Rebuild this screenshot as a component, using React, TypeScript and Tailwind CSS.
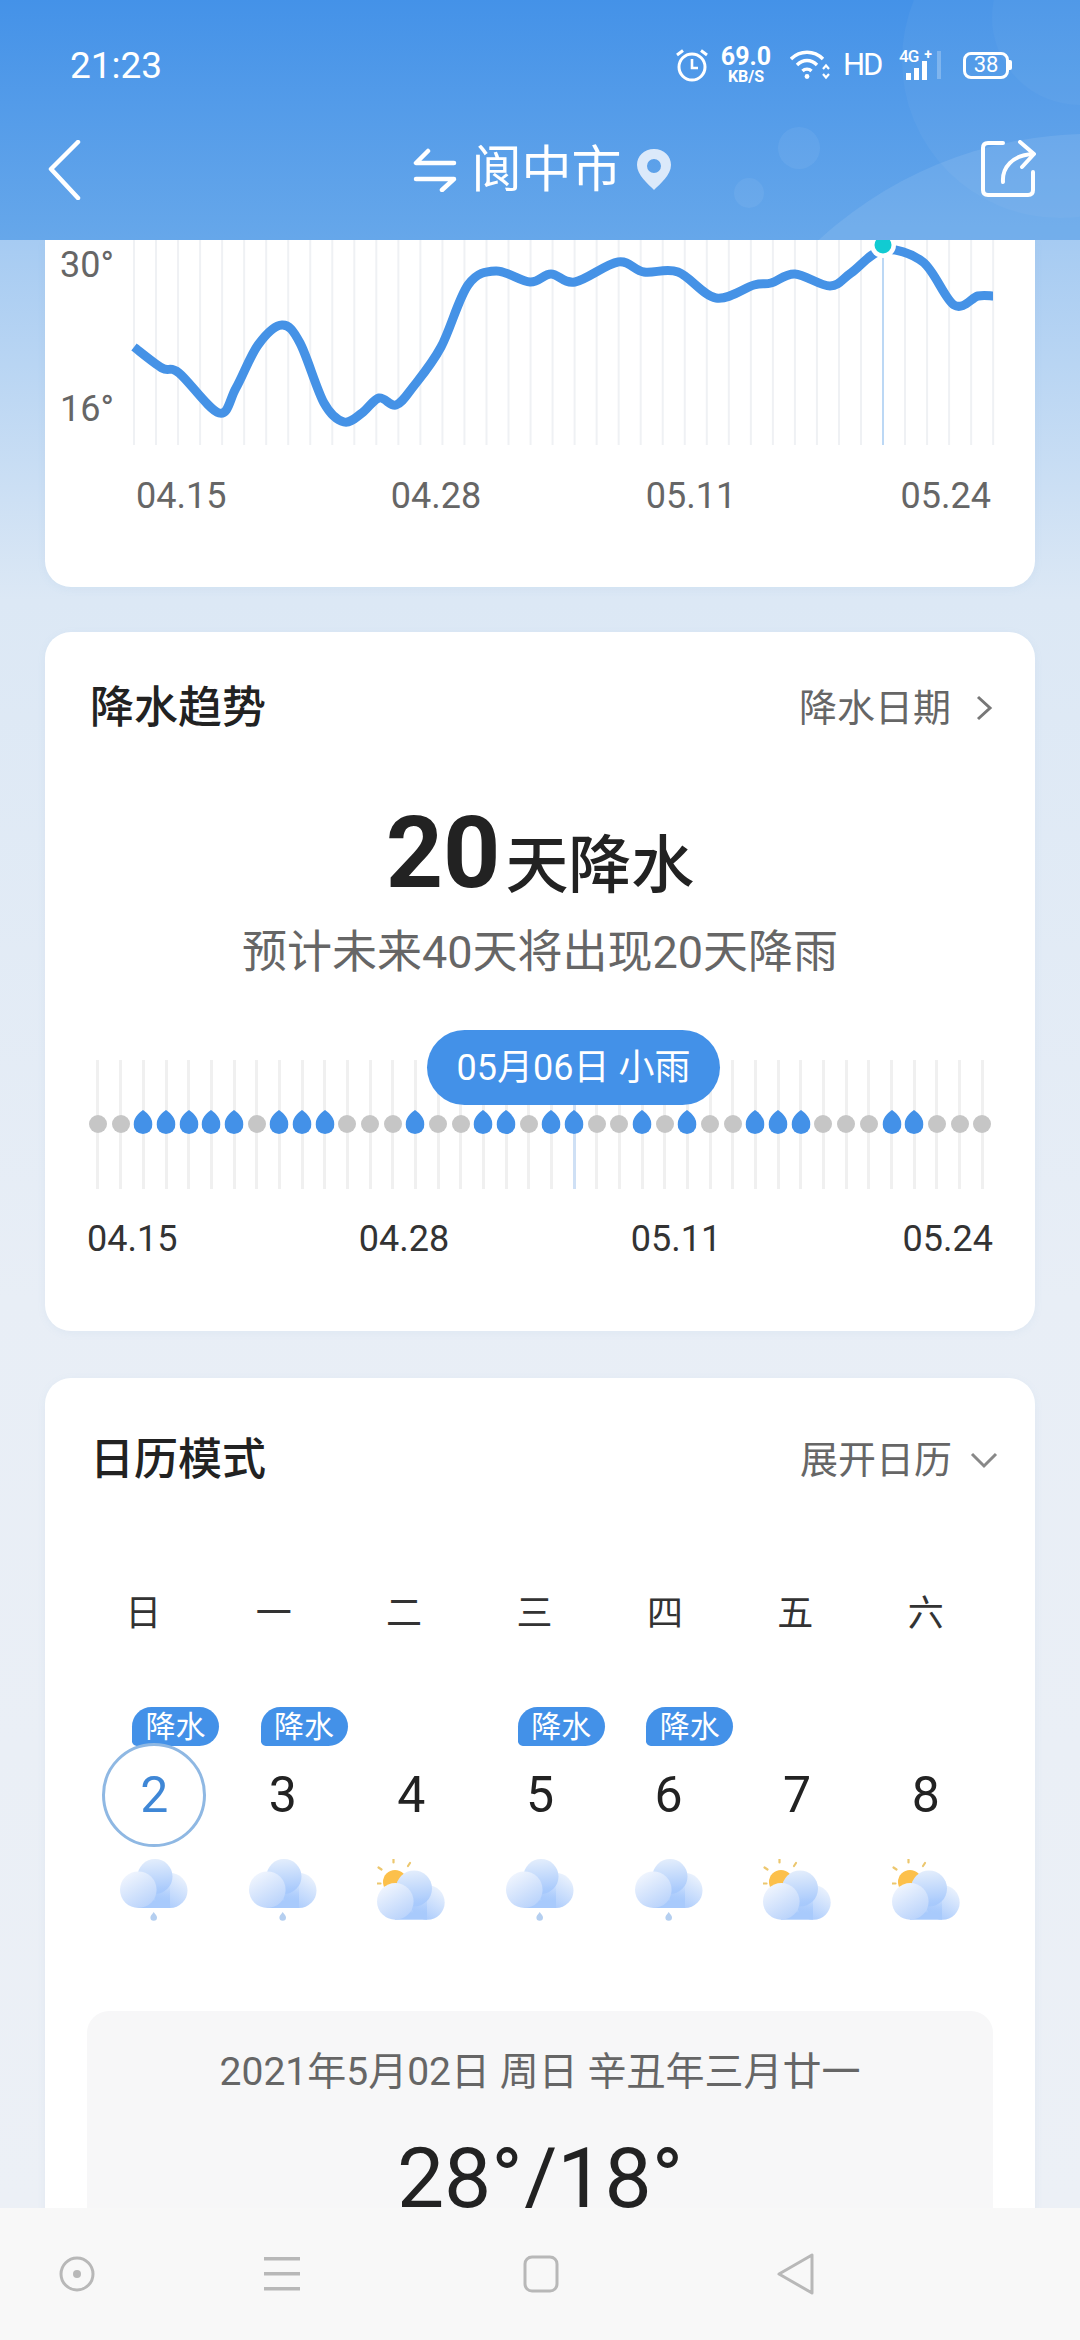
import { type ReactNode } from "react";

// page coordinates of the temperature curve, header overlaps the top of it
const CURVE: [number, number][] = [
  [134, 347], [162, 368], [179, 373], [219, 413], [236, 388], [258, 345], [282, 325], [300, 343],
  [324, 403], [344, 422], [362, 413], [379, 398], [396, 405], [413, 387], [441, 347], [468, 285],
  [496, 271], [530, 282], [551, 274], [575, 282], [618, 262], [644, 272], [678, 272], [716, 298],
  [754, 285], [771, 283], [795, 274], [830, 286], [851, 273], [883, 250], [923, 262], [954, 305],
  [978, 296], [993, 296],
];

function smoothPath(pts: [number, number][]) {
  let d = `M${pts[0][0]} ${pts[0][1]}`;
  for (let i = 0; i < pts.length - 1; i++) {
    const p0 = pts[Math.max(i - 1, 0)];
    const p1 = pts[i];
    const p2 = pts[i + 1];
    const p3 = pts[Math.min(i + 2, pts.length - 1)];
    const c1x = p1[0] + (p2[0] - p0[0]) / 6;
    const c1y = p1[1] + (p2[1] - p0[1]) / 6;
    const c2x = p2[0] - (p3[0] - p1[0]) / 6;
    const c2y = p2[1] - (p3[1] - p1[1]) / 6;
    d += ` C${c1x} ${c1y} ${c2x} ${c2y} ${p2[0]} ${p2[1]}`;
  }
  return d;
}

const RAIN_DAYS = [2, 3, 4, 5, 6, 8, 9, 10, 14, 17, 18, 20, 21, 24, 26, 29, 30, 31, 35, 36];
const WEEK = ["日", "一", "二", "三", "四", "五", "六"];
const DAYS = [
  { n: 2, rain: true },
  { n: 3, rain: true },
  { n: 4, rain: false },
  { n: 5, rain: true },
  { n: 6, rain: true },
  { n: 7, rain: false },
  { n: 8, rain: false },
];

function Card({ children, className = "" }: { children: ReactNode; className?: string }) {
  return (
    <div className={`mx-[45px] w-[990px] shrink-0 bg-white shadow-[0_2px_8px_rgba(120,160,210,0.08)] ${className}`}>
      {children}
    </div>
  );
}

function CardHead({ title, action, icon, className = "" }: { title: string; action: string; icon: ReactNode; className?: string }) {
  return (
    <div className={`flex h-[64px] items-center justify-between pl-[45px] ${className}`}>
      <span className="text-[44px] font-medium text-[#222]">{title}</span>
      <span className="flex items-center text-[38px] text-[#666]">
        {action}
        {icon}
      </span>
    </div>
  );
}

function CloudGradients({ id }: { id: string }) {
  return (
    <defs>
      <linearGradient id={`${id}-back`} x1="0.3" y1="0" x2="0.4" y2="1">
        <stop offset="0" stopColor="#e4eefc" />
        <stop offset="1" stopColor="#a4c7fc" />
      </linearGradient>
      <linearGradient id={`${id}-right`} x1="0.8" y1="0" x2="0.2" y2="1">
        <stop offset="0" stopColor="#eef4fd" />
        <stop offset="1" stopColor="#a4c7fc" />
      </linearGradient>
      <linearGradient id={`${id}-front`} x1="0.2" y1="0" x2="0.8" y2="1">
        <stop offset="0" stopColor="#f3f7fe" />
        <stop offset="1" stopColor="#b6d1fb" />
      </linearGradient>
      <linearGradient id={`${id}-base`} x1="0" y1="0" x2="0" y2="1">
        <stop offset="0" stopColor="#a8cafc" stopOpacity="0" />
        <stop offset="0.7" stopColor="#a8cafc" />
      </linearGradient>
    </defs>
  );
}

function RainCloud() {
  return (
    <svg width="68" height="64" viewBox="0 0 68 64">
      <CloudGradients id="rain" />
      <circle cx="50" cy="31.5" r="17.5" fill="url(#rain-right)" />
      <circle cx="35" cy="17.5" r="17.5" fill="url(#rain-back)" />
      <rect x="18" y="26" width="32" height="23" fill="url(#rain-base)" />
      <circle cx="18.3" cy="30.7" r="18.3" fill="url(#rain-front)" />
      <path d="M33.7 53 C35.5 55.5 37 56.5 37 58.5 A3.3 3.3 0 0 1 30.4 58.5 C30.4 56.5 32 55.5 33.7 53Z" fill="#b5cff0" />
    </svg>
  );
}

function SunCloud() {
  return (
    <svg width="68" height="64" viewBox="0 0 68 64">
      <CloudGradients id="sun" />
      <g stroke="#ecc76e" strokeWidth="2.2" strokeLinecap="round">
        <path d="M16.5 0.5 V3.5" />
        <path d="M33 4 L31 7" />
        <path d="M1.5 8.5 L4.5 10.5" />
        <path d="M0.5 24.5 H3.5" />
      </g>
      <circle cx="18" cy="23" r="12" fill="#fcc04b" />
      <circle cx="50.5" cy="43.5" r="17.2" fill="url(#sun-right)" />
      <circle cx="37" cy="29.5" r="18" fill="url(#sun-back)" />
      <rect x="18" y="38" width="32" height="22.7" fill="url(#sun-base)" />
      <circle cx="18.3" cy="42.4" r="18.3" fill="url(#sun-front)" />
    </svg>
  );
}

function StatusIcons() {
  return (
    <div className="flex items-center text-white">
      <svg width="36" height="36" viewBox="0 0 36 36" fill="none" stroke="white" className="mr-[12px]">
        <circle cx="18" cy="20" r="13" strokeWidth="3" />
        <path d="M18 12 V21 H24" strokeWidth="2.6" />
        <path d="M3 8 L9 3.5 M33 8 L27 3.5" strokeWidth="3" />
      </svg>
      <div className="mr-[20px] flex w-[48px] flex-col items-center font-bold leading-none">
        <span className="text-[25px] leading-[24px]">69.0</span>
        <span className="text-[16px] leading-[16px]">KB/S</span>
      </div>
      <svg width="40" height="30" viewBox="0 0 40 30" fill="none" stroke="white" strokeWidth="3.4" className="mr-[13px]">
        <path d="M1 9 C 10 0 24 0 33 9" />
        <path d="M7 15 C 13 9 21 9 27 15" />
        <path d="M12.5 21 C 15 18.5 19 18.5 21.5 21" />
        <circle cx="17" cy="26.5" r="2.4" fill="white" stroke="none" />
        <path d="M33 19 L36 15.5 L39 19 M33 24 L36 27.5 L39 24" strokeWidth="2.2" />
      </svg>
      <span className="mr-[20px] w-[36px] text-[31px] tracking-[-2px]">HD</span>
      <div className="relative mr-[4px] h-[30px] w-[34px]">
        <span className="absolute -top-[2px] left-0 text-[17px] font-medium leading-[17px] tracking-[-1px]">4G</span>
        <span className="absolute -top-[3px] right-[1px] text-[14px] font-bold leading-[14px]">+</span>
        <div className="absolute bottom-0 left-[7px] flex items-end gap-[3px]">
          <span className="h-[7px] w-[5px] bg-white" />
          <span className="h-[12px] w-[5px] bg-white" />
          <span className="h-[19px] w-[5px] bg-white" />
        </div>
      </div>
      <span className="mr-[22px] h-[28px] w-[4px] bg-white/25" />
      <div className="flex items-center">
        <div className="flex h-[27px] w-[46px] items-center justify-center rounded-[8px] border-[3px] border-white text-[22px] leading-none">38</div>
        <span className="h-[10px] w-[3px] rounded-r-[2px] bg-white" />
      </div>
    </div>
  );
}

function Header() {
  return (
    <div className="relative z-10 h-[240px] w-full shrink-0 overflow-hidden bg-gradient-to-b from-[#4492e8] to-[#66a7ea]">
      <div className="absolute left-[902px] top-[-98px] h-[316px] w-[316px] rounded-full bg-white/[0.04]" />
      <div className="absolute left-[992px] top-[-70px] h-[175px] w-[175px] rounded-full bg-white/[0.03]" />
      <div className="absolute left-[690px] top-[134px] h-[800px] w-[800px] rounded-full bg-white/[0.09]" />
      <div className="absolute left-[778px] top-[127px] h-[42px] w-[42px] rounded-full bg-white/[0.06]" />
      <div className="absolute left-[734px] top-[178px] h-[30px] w-[30px] rounded-full bg-white/[0.06]" />
      <div className="relative flex h-[130px] items-center justify-between pl-[70px] pr-[68px] text-white">
        <span className="text-[37px] leading-none">21:23</span>
        <StatusIcons />
      </div>
      <div className="relative flex h-[80px] items-center justify-between pl-[48px] pr-[44px]">
        <svg width="56" height="60" viewBox="0 0 56 60" fill="none" stroke="white" strokeWidth="4.5" strokeLinecap="round" strokeLinejoin="round">
          <path d="M30 2 L3 29 L30 58" />
        </svg>
        <div className="flex items-center">
          <svg width="44" height="44" viewBox="0 0 44 44" fill="none" stroke="white" strokeWidth="4.5" strokeLinecap="round" strokeLinejoin="round" className="mr-[15px]">
            <path d="M15 3 L3 15 H41" />
            <path d="M3 31 H41 L29 42" />
          </svg>
          <span className="text-[50px] leading-none text-white">阆中市</span>
          <svg width="36" height="42" viewBox="0 0 36 42" className="ml-[14px]">
            <path fillRule="evenodd" d="M18 0 C28 0 35 7 35 16 C35 26 24 35 18 41 C12 35 1 26 1 16 C1 7 8 0 18 0Z M18 10 A7 7 0 1 0 18 24 A7 7 0 1 0 18 10Z" fill="#dbe9fa" />
          </svg>
        </div>
        <svg width="56" height="60" viewBox="0 0 56 60" fill="none" stroke="white" strokeWidth="4" strokeLinecap="round" strokeLinejoin="round">
          <path d="M23 3 H8 Q3 3 3 8 V50 Q3 55 8 55 H48 Q53 55 53 50 V32" />
          <path d="M23 42 C22 28 32 15 53 14" />
          <path d="M40 2 L54 14 L42 27" />
        </svg>
      </div>
    </div>
  );
}

function TempChart() {
  const lines = Array.from({ length: 40 }, (_, i) => 134 + i * 22.03);
  return (
    <Card className="h-[347px] rounded-b-[26px]">
      <div className="relative h-[205px] overflow-hidden">
        <svg width="990" height="205" viewBox="45 240 990 205" fill="none">
          {lines.map((x, i) => (
            <line key={i} x1={x} x2={x} y1="240" y2="445" stroke={i === 34 ? "#bcd8f5" : "#eff1f4"} strokeWidth="2" />
          ))}
          <path d={smoothPath(CURVE)} stroke="#4592e6" strokeWidth="9" strokeLinejoin="round" />
          <circle cx="883" cy="245" r="13" fill="white" />
          <circle cx="883" cy="245" r="8.5" fill="#11cbd2" />
        </svg>
        <span className="absolute left-[15px] top-[5px] text-[36px] leading-[40px] text-[#666]">30°</span>
        <span className="absolute left-[15px] top-[149px] text-[36px] leading-[40px] text-[#666]">16°</span>
      </div>
      <div className="mt-[26px] flex h-[50px] items-center justify-between pl-[91px] pr-[44px] text-[36px] text-[#666]">
        <span>04.15</span>
        <span>04.28</span>
        <span>05.11</span>
        <span>05.24</span>
      </div>
    </Card>
  );
}

function RainStrip() {
  return (
    <div className="relative mt-[77px] flex h-[129px] px-[41.67px]">
      {Array.from({ length: 40 }, (_, i) => (
        <div key={i} className="relative flex flex-1 justify-center">
          <span className={`h-full w-[3px] ${i === 21 ? "bg-[#cfe0f5]" : "bg-[#f0f0f0]"}`} />
          {RAIN_DAYS.includes(i) ? (
            <svg width="19" height="24" viewBox="0 0 19 24" className="absolute left-1/2 top-[50px] -translate-x-1/2">
              <path d="M9.5 0 C15 3.5 19 9 19 14.5 A9.5 9.5 0 0 1 0 14.5 C0 9 4 3.5 9.5 0Z" fill="#4391e8" />
            </svg>
          ) : (
            <span className="absolute left-1/2 top-[55px] h-[18px] w-[18px] -translate-x-1/2 rounded-full bg-[#c6c6c6]" />
          )}
        </div>
      ))}
      <div className="absolute left-[382px] top-[-30px] flex h-[75px] w-[293px] items-center justify-center rounded-full bg-[#4391e8] text-[36px] text-white">
        05月06日&nbsp;小雨
      </div>
    </div>
  );
}

function RainCard() {
  return (
    <Card className="mt-[45px] h-[699px] rounded-[26px] pt-[44px]">
      <CardHead
        title="降水趋势"
        action="降水日期"
        className="pr-[42px]"
        icon={
          <svg width="18" height="28" viewBox="0 0 18 28" fill="none" stroke="#777" strokeWidth="3" className="ml-[24px]">
            <path d="M3 3 L15 14 L3 25" />
          </svg>
        }
      />
      <div className="mt-[58px] flex h-[110px] items-baseline justify-center leading-[110px]">
        <span className="text-[100px] font-bold text-[#222]">20</span>
        <span className="ml-[5px] text-[63px] font-medium text-[#222]">天降水</span>
      </div>
      <div className="mt-[15px] flex h-[60px] items-center justify-center text-[45px] text-[#666]">预计未来40天将出现20天降雨</div>
      <RainStrip />
      <div className="mt-[25px] flex h-[50px] items-center justify-between pl-[42px] pr-[42px] text-[36px] text-[#333]">
        <span>04.15</span>
        <span>04.28</span>
        <span>05.11</span>
        <span>05.24</span>
      </div>
    </Card>
  );
}

function CalendarCard() {
  return (
    <Card className="mt-[47px] rounded-t-[26px] pt-[50px]">
      <CardHead
        title="日历模式"
        action="展开日历"
        className="pr-[37px]"
        icon={
          <svg width="28" height="18" viewBox="0 0 28 18" fill="none" stroke="#888" strokeWidth="3" className="ml-[18px]">
            <path d="M2 3 L14 15 L26 3" />
          </svg>
        }
      />
      <div className="mt-[95px] grid h-[50px] grid-cols-7 pl-[33px] pr-[44px] text-[36px] text-[#333]">
        {WEEK.map((w) => (
          <span key={w} className="flex items-center justify-center">{w}</span>
        ))}
      </div>
      <div className="mt-[70px] grid grid-cols-7 px-[45px]">
        {DAYS.map((d) => (
          <div key={d.n} className="flex flex-col items-center">
            <div className="h-[39px] w-full">
              {d.rain ? (
                <span className="ml-[42px] flex h-[39px] w-[87px] items-center justify-center rounded-[20px] rounded-bl-[5px] bg-[#4391e8] text-[30px] leading-none text-white">降水</span>
              ) : null}
            </div>
            <div className={`mt-[-3px] flex h-[104px] w-[104px] items-center justify-center rounded-full text-[50px] ${d.n === 2 ? "border-[3px] border-[#8fb8e3] text-[#3f87d6]" : "text-[#222]"}`}>
              {d.n}
            </div>
            <div className="mt-[12px]">{d.rain ? <RainCloud /> : <SunCloud />}</div>
          </div>
        ))}
      </div>
      <div className="mx-[42px] mt-[88px] h-[300px] rounded-t-[22px] bg-[#f7f7f8] pt-[37px]">
        <div className="flex h-[48px] items-center justify-center text-[39px] text-[#666]">2021年5月02日 周日 辛丑年三月廿一</div>
        <div className="mt-[35px] flex h-[96px] items-center justify-center text-[84px] leading-none text-[#222]">28°/18°</div>
      </div>
    </Card>
  );
}

function NavBar() {
  return (
    <div className="relative z-10 flex h-[132px] w-full shrink-0 items-center bg-[#f8f8f8] pl-[59px]">
      <svg width="36" height="36" viewBox="0 0 36 36" fill="none" stroke="#b8b8b8" strokeWidth="3">
        <circle cx="18" cy="18" r="16" />
        <circle cx="18" cy="18" r="4" fill="#b8b8b8" stroke="none" />
      </svg>
      <svg width="36" height="34" viewBox="0 0 36 34" fill="#b8b8b8" className="ml-[169px]">
        <rect x="0" y="0" width="36" height="3.5" />
        <rect x="0" y="15" width="36" height="3.5" />
        <rect x="0" y="30" width="36" height="3.5" />
      </svg>
      <svg width="36" height="38" viewBox="0 0 36 38" fill="none" stroke="#b8b8b8" strokeWidth="3" className="ml-[223px]">
        <rect x="2" y="2" width="32" height="34" rx="7" />
      </svg>
      <svg width="38" height="42" viewBox="0 0 38 42" fill="none" stroke="#b8b8b8" strokeWidth="3" strokeLinejoin="round" className="ml-[218px]">
        <path d="M35 2 V40 L2 21Z" />
      </svg>
    </div>
  );
}

export default function App() {
  return (
    <div className="flex h-[2340px] w-[1080px] flex-col overflow-hidden bg-[linear-gradient(180deg,#a6cbf2_240px,#dce8f5_600px,#e8eef6_1300px,#ecf0f6_2200px)] font-[family-name:Roboto,'Noto_Sans_CJK_SC',sans-serif]">
      <Header />
      <div className="flex min-h-0 flex-1 flex-col overflow-hidden">
        <TempChart />
        <RainCard />
        <CalendarCard />
      </div>
      <NavBar />
    </div>
  );
}
